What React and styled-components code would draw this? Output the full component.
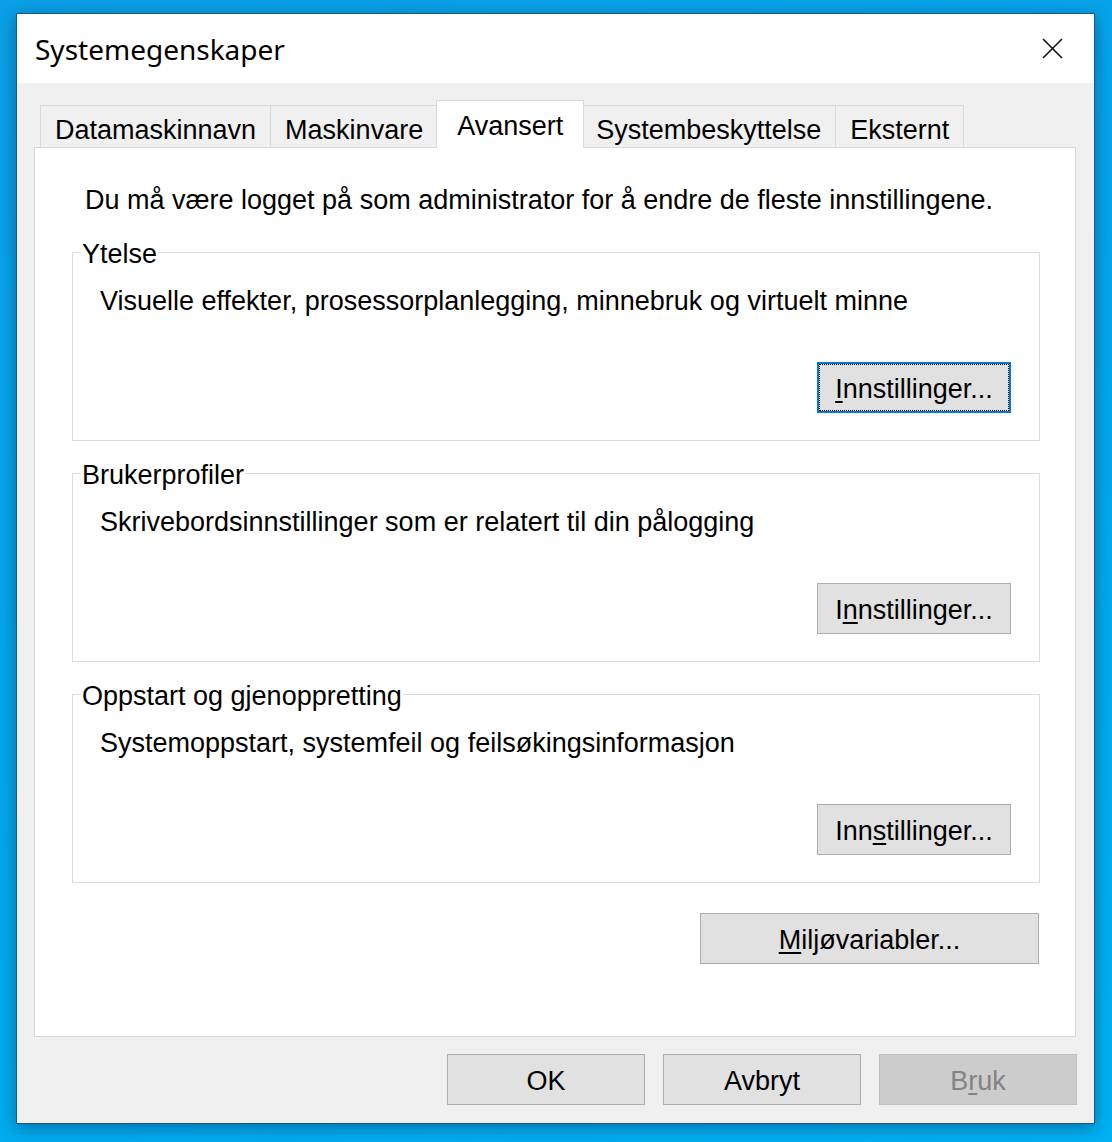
import React from 'react';
import styled, { createGlobalStyle } from 'styled-components';

const GlobalStyle = createGlobalStyle`
  html, body {
    margin: 0;
    padding: 0;
  }
  body {
    width: 1112px;
    height: 1142px;
    overflow: hidden;
    background: linear-gradient(160deg, #0a9fe6 0%, #03a8ee 55%, #00b2f2 100%);
    font-family: "Liberation Sans", Arial, sans-serif;
    color: #000;
  }
`;

const Desktop = styled.div`
  box-sizing: border-box;
  height: 1142px;
  padding: 13px 0 0 16px;
`;

const Window = styled.div`
  box-sizing: border-box;
  width: 1079px;
  height: 1111px;
  border: 1px solid #1a5a7a;
  background: #f0f0f0;
  display: flex;
  flex-direction: column;
  box-shadow: 0 4px 16px rgba(0, 40, 80, 0.45);
`;

const TitleBar = styled.div`
  height: 69px;
  flex: none;
  background: #fff;
  display: flex;
  align-items: center;
  justify-content: space-between;
  padding: 0 31px 0 18px;
`;

const Title = styled.span`
  font-family: "Noto Sans", "Open Sans", sans-serif;
  font-size: 28px;
`;

const CloseBtn = styled.button`
  border: 0;
  background: none;
  padding: 0;
  width: 21px;
  height: 21px;
  display: flex;
`;

const Body = styled.div`
  flex: 1;
  display: flex;
  flex-direction: column;
  padding: 17px 18px 18px 17px;
  font-size: 27px;
`;

const TabStrip = styled.div`
  height: 47px;
  flex: none;
  display: flex;
  align-items: flex-end;
  padding-left: 6px;
  position: relative;
  z-index: 1;
`;

const Tab = styled.div`
  box-sizing: border-box;
  height: ${p => (p.$active ? '48px' : '42px')};
  margin: ${p => (p.$active ? '0 -2px -1px -2px' : '0 0 0 -1px')};
  padding: ${p => (p.$active ? '10px 20px 0' : '9px 14px 0')};
  border: 1px solid #d9d9d9;
  border-bottom: none;
  background: ${p => (p.$active ? '#fff' : '#f0f0f0')};
  line-height: 30px;
  white-space: nowrap;
  position: relative;
  z-index: ${p => (p.$active ? 2 : 1)};
  &:first-child {
    margin-left: 0;
  }
`;

const Panel = styled.div`
  flex: 1;
  background: #fff;
  border: 1px solid #d9d9d9;
  padding: 37px 35px 0 37px;
  display: flex;
  flex-direction: column;
`;

const Intro = styled.div`
  line-height: 30px;
  margin: 0 0 22px 13px;
`;

const Group = styled.fieldset`
  margin: 0 0 17px;
  padding: 0 0 27px;
  border: 1px solid #dcdcdc;
  min-width: 0;
`;

const Legend = styled.legend`
  margin-left: 8px;
  padding: 4px 1px 0;
  line-height: 26px;
`;

const GroupText = styled.div`
  line-height: 30px;
  margin: 19px 0 0 27px;
`;

const ButtonRow = styled.div`
  display: flex;
  justify-content: flex-end;
  margin-top: ${p => p.$top || '0px'};
  margin-right: ${p => p.$right || '0px'};
  gap: 18px;
`;

const Button = styled.button`
  box-sizing: border-box;
  width: ${p => p.$width || '194px'};
  height: 51px;
  font-family: "Liberation Sans", Arial, sans-serif;
  font-size: 27px;
  color: ${p => (p.disabled ? '#838383' : '#000')};
  background: ${p => (p.disabled ? '#cccccc' : '#e1e1e1')};
  border: ${p => (p.$focused ? '2px solid #0078d7' : `1px solid ${p.disabled ? '#bfbfbf' : '#adadad'}`)};
  padding: 3px 0 0;
  position: relative;
  &::after {
    content: '';
    display: ${p => (p.$focused ? 'block' : 'none')};
    position: absolute;
    inset: 0;
    border: 1px dotted #000;
  }
  u {
    text-underline-offset: 3px;
    text-decoration-thickness: 2px;
  }
`;

const Footer = styled.div`
  display: flex;
  justify-content: flex-end;
  gap: 18px;
  margin: 17px -1px 0 0;
`;

const tabs = ['Datamaskinnavn', 'Maskinvare', 'Avansert', 'Systembeskyttelse', 'Eksternt'];

const groups = [
  {
    title: 'Ytelse',
    text: 'Visuelle effekter, prosessorplanlegging, minnebruk og virtuelt minne',
    label: <><u>I</u>nnstillinger...</>,
    focused: true,
  },
  {
    title: 'Brukerprofiler',
    text: 'Skrivebordsinnstillinger som er relatert til din pålogging',
    label: <>I<u>n</u>nstillinger...</>,
  },
  {
    title: 'Oppstart og gjenoppretting',
    text: 'Systemoppstart, systemfeil og feilsøkingsinformasjon',
    label: <>Inn<u>s</u>tillinger...</>,
  },
];

export default function App() {
  return (
    <Desktop>
      <GlobalStyle />
      <Window>
        <TitleBar>
          <Title>Systemegenskaper</Title>
          <CloseBtn aria-label="Lukk">
            <svg width="21" height="21" viewBox="0 0 21 21">
              <path d="M1 1 L20 20 M20 1 L1 20" stroke="#111" strokeWidth="1.6" fill="none" />
            </svg>
          </CloseBtn>
        </TitleBar>
        <Body>
          <TabStrip>
            {tabs.map(t => (
              <Tab key={t} $active={t === 'Avansert'}>{t}</Tab>
            ))}
          </TabStrip>
          <Panel>
            <Intro>Du må være logget på som administrator for å endre de fleste innstillingene.</Intro>
            {groups.map(g => (
              <Group key={g.title}>
                <Legend>{g.title}</Legend>
                <GroupText>{g.text}</GroupText>
                <ButtonRow $top="46px" $right="28px">
                  <Button $focused={g.focused}>{g.label}</Button>
                </ButtonRow>
              </Group>
            ))}
            <ButtonRow $top="13px" $right="1px">
              <Button $width="339px"><u>M</u>iljøvariabler...</Button>
            </ButtonRow>
          </Panel>
          <Footer>
            <Button $width="198px">OK</Button>
            <Button $width="198px">Avbryt</Button>
            <Button $width="198px" disabled>B<u>r</u>uk</Button>
          </Footer>
        </Body>
      </Window>
    </Desktop>
  );
}
